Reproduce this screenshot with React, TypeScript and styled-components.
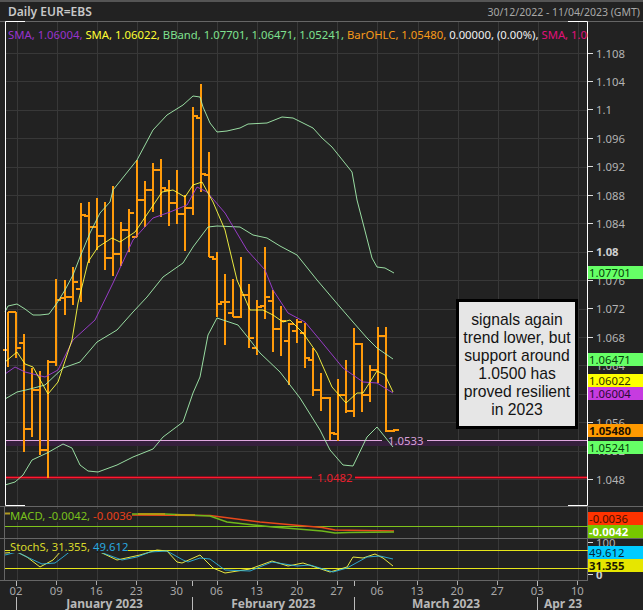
import styled, { createGlobalStyle } from "styled-components";

const GlobalStyle = createGlobalStyle`
	html, body {
		margin: 0;
		padding: 0;
		background: #222;
	}
`;

const Page = styled.div`
	display: flex;
	flex-direction: column;
	width: 643px;
	height: 610px;
	overflow: hidden;
	background: #222;
	border-top: 2px solid #555;
	box-sizing: border-box;
	font-family: "Noto Sans", "Liberation Sans", sans-serif;
	font-size: 11.3px;
	color: #b4b4b4;
`;
const Header = styled.div`
	display: flex;
	flex: none;
	justify-content: space-between;
	align-items: center;
	height: 19px;
	padding: 0 3px 0 8px;
`;
const Title = styled.span`
	font-size: 12px;
	font-weight: 600;
	color: #c8c8c8;
`;
const Range = styled.span`
	font-size: 10.5px;
	color: #a8a8a8;
`;
const PaneRow = styled.div<{ $height: number }>`
	display: flex;
	flex: none;
	height: ${(p) => p.$height}px;
	border-top: 1px solid #666;
	box-sizing: border-box;
`;
const Plot = styled.div`
	position: relative;
	width: 588px;
	flex: none;
	svg {
		display: block;
		overflow: visible;
	}
`;
const Legend = styled.div<{ $top: number; $left: number; $solid?: boolean }>`
	position: absolute;
	top: ${(p) => p.$top}px;
	left: ${(p) => p.$left}px;
	max-width: ${(p) => 588 - p.$left}px;
	overflow: hidden;
	white-space: nowrap;
	line-height: 13px;
	background: ${(p) => (p.$solid ? "#222" : "transparent")};
`;
const Value = styled.span<{ $color: string }>`
	color: ${(p) => p.$color};
`;
const Callout = styled.div`
	position: absolute;
	left: 456px;
	top: 277px;
	width: 122px;
	height: 130px;
	box-sizing: border-box;
	border: 3px solid #000;
	background: #e6e6e6;
	color: #141414;
	padding-top: 9px;
	font-family: "Liberation Sans", Arial, sans-serif;
	font-size: 15.7px;
	line-height: 18px;
	text-align: center;
	white-space: nowrap;
`;
const Axis = styled.div<{ $pad?: number }>`
	position: relative;
	flex: 1;
	padding-top: ${(p) => p.$pad || 0}px;
`;
const Tick = styled.div<{ $height: number; $bold?: boolean; $skip?: number }>`
	display: flex;
	align-items: center;
	gap: 3px;
	height: ${(p) => p.$height}px;
	margin-top: ${(p) => p.$skip || 0}px;
	font-weight: ${(p) => (p.$bold ? 700 : 400)};
	color: ${(p) => (p.$bold ? "#d0d0d0" : "#b4b4b4")};
	&:before {
		content: "";
		width: 5px;
		height: 1px;
		background: #ddd;
	}
`;
const Tag = styled.div<{ $bg: string; $fg: string; $top?: number; $bold?: boolean }>`
	position: ${(p) => (p.$top === undefined ? "static" : "absolute")};
	top: ${(p) => p.$top}px;
	left: 0;
	right: 0;
	height: 13px;
	padding-left: 1px;
	background: ${(p) => p.$bg};
	color: ${(p) => p.$fg};
	font-weight: ${(p) => (p.$bold ? 700 : 400)};
	line-height: 13px;
`;
const TimeAxis = styled.div`
	flex: none;
	width: 588px;
	height: 30px;
	border-top: 1px solid #666;
	box-sizing: border-box;
`;
const Weeks = styled.div`
	display: grid;
	grid-template-columns: repeat(15, 40.1px);
	margin-left: -4px;
	height: 14px;
`;
const Week = styled.div`
	position: relative;
	text-align: center;
	line-height: 20px;
	color: #a8a8a8;
	&:before {
		content: "";
		position: absolute;
		top: 0;
		left: 50%;
		width: 1px;
		height: 4px;
		background: #aaa;
	}
`;
const Months = styled.div`
	display: flex;
	margin-left: 16px;
	margin-top: 2px;
	height: 13px;
`;
const Month = styled.div<{ $width: number }>`
	position: relative;
	width: ${(p) => p.$width}px;
	border-left: 1px solid #bbb;
	box-sizing: border-box;
	text-align: center;
	font-size: 12px;
	font-weight: 700;
	line-height: 13px;
	color: #b8b8b8;
	&:before {
		content: "";
		position: absolute;
		top: -16px;
		left: -1px;
		width: 1px;
		height: 5px;
		background: #bbb;
	}
`;

// [top, bottom, open, close]
const bars = [
	[312, 367, 350, 312], [312, 358, 312, 348], [334, 452, 343, 429], [368, 437, 429, 390],
	[371, 455, 390, 450], [360, 478, 450, 362], [279, 366, 362, 300], [280, 315, 298, 297],
	[267, 305, 297, 282], [203, 302, 289, 215], [202, 263, 216, 227], [198, 250, 227, 236],
	[202, 270, 236, 258], [186, 276, 258, 254], [222, 266, 254, 230], [209, 252, 230, 213],
	[160, 237, 237, 200], [181, 227, 200, 190], [163, 212, 190, 170], [159, 217, 170, 188],
	[180, 226, 190, 203], [170, 224, 203, 214], [195, 251, 214, 208], [107, 215, 208, 116],
	[84, 192, 118, 174], [152, 257, 175, 257], [252, 317, 259, 304], [274, 345, 302, 302],
	[279, 317, 313, 317], [257, 318, 317, 295], [284, 348, 295, 338], [300, 355, 348, 307],
	[247, 319, 306, 297], [290, 352, 301, 329], [306, 356, 329, 321], [323, 385, 341, 324],
	[319, 343, 331, 322], [323, 368, 333, 358], [348, 396, 360, 390], [373, 411, 390, 398],
	[397, 440, 398, 433], [379, 441, 434, 395], [360, 413, 395, 411], [328, 417, 411, 344],
	[343, 412, 344, 395], [365, 402, 395, 370], [327, 383, 370, 336], [327, 432, 336, 431],
	[429, 432, 431, 430],
];
const barPath = bars
	.map((b, i) => {
		const x = Math.round(8.3 + 8.03 * i);
		return `M${x} ${b[0]}V${b[1]}M${x - 5} ${b[2]}H${x}M${x} ${b[3]}H${x + 5}`;
	})
	.join("");

const upper = "5,312 8,306 17,304 25,309 33,315 40,315 49,314 57,303 65,290 73,275 80,257 90,233 100,213 110,202 113,190 137,160 153,130 167,115 183,105 193,96 200,97 203,107 210,123 217,132 227,131 240,128 248,124 267,123 282,117 293,118 313,128 322,138 332,147 352,172 357,200 364,227 372,258 377,267 385,268 394,273";
const middle = "5,399 17,392 30,389 45,385 63,368 80,362 97,342 117,330 133,312 147,297 163,277 183,263 193,247 208,227 217,226 240,227 253,235 267,238 280,246 297,255 317,280 340,307 353,322 367,338 377,348 393,359";
const lower = "5,485 15,482 23,475 32,460 47,453 63,444 72,448 80,465 88,471 98,472 117,465 133,457 153,449 163,437 183,422 193,393 200,377 208,335 217,318 238,325 250,340 260,353 280,372 300,398 320,430 330,450 343,465 353,466 367,437 377,427 393,447";
const smaYellow = "5,362 17,352 25,364 33,367 48,394 58,382 72,340 78,303 88,262 98,247 112,238 120,242 135,232 150,210 162,192 173,190 185,197 193,185 202,182 213,202 225,230 237,280 250,310 263,310 273,315 283,322 290,320 303,333 317,353 332,387 346,403 357,393 363,393 377,371 385,375 393,392";
const smaPurple = "5,374 15,367 25,372 45,377 58,370 73,340 95,320 113,283 133,240 153,218 170,212 187,205 197,187 207,192 225,213 247,250 265,270 273,290 288,313 305,322 320,340 343,368 363,382 377,383 393,393";

const macdSignal = "130,515 210,515.5 260,522 322,527.5 335,530 394,531";
const macdLine = "130,514 165,514 210,516 227,522 273,527 322,531 335,533 349,532.5 394,532";
const stochBlue = "5,555 17,552 27,557 42,564 55,563 63,557 72,550 M100,552 122,560 137,557 150,552 167,551 183,560 188,562 200,558 210,559 225,570 250,571 272,562 297,566 310,565 333,572 347,568 367,557 380,556 393,559";
const stochYellow = "5,553 17,552 27,557 40,567 53,560 62,550 M100,552 117,560 140,555 157,550 167,551 177,562 182,563 200,555 213,568 225,573 250,569 272,561 288,566 303,563 330,572 347,567 353,557 363,558 375,554 383,558 393,566";
const toPath = (s: string) => "M" + s.replace(/ M/g, "M").replace(/ /g, "L");

const weekX = Array.from({ length: 15 }, (_, i) => 16.5 + 40.1 * i);
const priceY = Array.from({ length: 16 }, (_, i) => 53 + 28.4 * i);

const priceTicks = ["1.108", "1.104", "1.1", "1.096", "1.092", "1.088", "1.084", "1.08", "1.076", "1.072", "1.068", "1.064", "1.06", "1.056", "1.052", "1.048"];
const priceTags = [
	{ top: 244, bg: "#66ff66", fg: "#04400a", text: "1.07701" },
	{ top: 331, bg: "#66ff66", fg: "#04400a", text: "1.06471" },
	{ top: 352, bg: "#ffff00", fg: "#333300", text: "1.06022" },
	{ top: 365, bg: "#c63be0", fg: "#2a0a33", text: "1.06004" },
	{ top: 402, bg: "#ff9900", fg: "#1a0f00", text: "1.05480", bold: true },
	{ top: 419, bg: "#66ff66", fg: "#04400a", text: "1.05241" },
];
const weeks = ["02", "09", "16", "23", "30", "06", "13", "20", "27", "06", "13", "20", "27", "03", "10"];

const Lines = ({ d, color }: { d: string; color: string }) => (
	<path d={d} fill="none" stroke={color} strokeWidth="0.9" strokeLinejoin="round" />
);

const PriceChart = () => (
	<svg width="588" height="484" viewBox="0 22 588 484">
		{weekX.map((x) => (
			<path key={x} d={`M${Math.round(x)}.5 22V506`} stroke="#383838" />
		))}
		{priceY.map((y) => (
			<path key={y} d={`M5 ${Math.round(y)}.5H588`} stroke="#383838" />
		))}
		<rect x="5" y="441" width="583" height="5" fill="#351f3c" />
		<path d="M5 440.5H382M427 440.5H588" stroke="#e0a8e0" />
		<path d="M5 477.5H312M355 477.5H588" stroke="#50101a" strokeWidth="3" />
		<path d="M5 477.5H312M355 477.5H588" stroke="#ff1a30" strokeWidth="1.3" />
		<path d={barPath} fill="none" stroke="#ff9a0a" strokeWidth="2" shapeRendering="crispEdges" />
		<Lines d={toPath(upper)} color="#a6f0b0" />
		<Lines d={toPath(middle)} color="#a6f0b0" />
		<Lines d={toPath(lower)} color="#a6f0b0" />
		<Lines d={toPath(smaPurple)} color="#a43ed8" />
		<Lines d={toPath(smaYellow)} color="#ffff44" />
		<text x="388" y="445" fill="#d8a0d8" fontSize="11.3" fontFamily="Noto Sans">1.0533</text>
		<text x="317" y="482" fill="#e8202e" fontSize="11.3" fontFamily="Noto Sans">1.0482</text>
		<path d="M25 21.5H5.5V505.5H25M568 21.5H587.5V505.5H568" fill="none" stroke="#fff" />
	</svg>
);

const MacdChart = () => (
	<svg width="588" height="31" viewBox="0 507 588 31">
		{weekX.map((x) => (
			<path key={x} d={`M${Math.round(x)}.5 507V538`} stroke="#383838" />
		))}
		<path d="M4.5 507V538M587.5 507V538" stroke="#666" />
		<path d="M5 526.5H588" stroke="#7fc41c" />
		<path d="M5 513.5H11" stroke="#b09a20" strokeWidth="2" />
		<path d={toPath(macdSignal)} fill="none" stroke="#e8481a" strokeWidth="1.5" />
		<path d={toPath(macdLine)} fill="none" stroke="#6fb81c" strokeWidth="1.5" />
		<path d="M138 514H165M175 515H195" stroke="#c89a10" strokeWidth="1.5" />
	</svg>
);

const StochChart = () => (
	<svg width="588" height="41" viewBox="0 539 588 41">
		{weekX.map((x) => (
			<path key={x} d={`M${Math.round(x)}.5 539V580`} stroke="#383838" />
		))}
		<path d="M4.5 539V580M587.5 539V580" stroke="#666" />
		<path d="M5 550.5H588M5 568.5H588" stroke="#e6e61a" />
		<Lines d={toPath(stochYellow)} color="#ffff44" />
		<Lines d={toPath(stochBlue)} color="#2fb4e0" />
	</svg>
);

export default function App() {
	return (
		<Page>
			<GlobalStyle />
			<Header>
				<Title>Daily EUR=EBS</Title>
				<Range>30/12/2022 - 11/04/2023 (GMT)</Range>
			</Header>
			<PaneRow $height={485}>
				<Plot>
					<PriceChart />
					<Legend $top={6} $left={8}>
						<Value $color="#9933cc">SMA, 1.06004, </Value>
						<Value $color="#ffff33">SMA, 1.06022, </Value>
						<Value $color="#7fe08f">BBand, 1.07701, 1.06471, 1.05241, </Value>
						<Value $color="#f59a1a">BarOHLC, 1.05480, </Value>
						<Value $color="#f0f0f0">0.00000, (0.00%), </Value>
						<Value $color="#e0107a">SMA, 1.06000</Value>
					</Legend>
					<Callout>
						signals again<br />
						trend lower, but<br />
						support around<br />
						1.0500 has<br />
						proved resilient<br />
						in 2023
					</Callout>
				</Plot>
				<Axis $pad={17}>
					{priceTicks.map((t) => (
						<Tick key={t} $height={28.4} $bold={t === "1.08"}>{t}</Tick>
					))}
					{priceTags.map((t) => (
						<Tag key={t.text} $top={t.top} $bg={t.bg} $fg={t.fg} $bold={t.bold}>{t.text}</Tag>
					))}
				</Axis>
			</PaneRow>
			<PaneRow $height={32}>
				<Plot>
					<MacdChart />
					<Legend $top={2} $left={10} $solid>
						<Value $color="#7ac11c">MACD, -0.0042, </Value>
						<Value $color="#e8401a">-0.0036</Value>
					</Legend>
				</Plot>
				<Axis $pad={5}>
					<Tag $bg="#ff3300" $fg="#4a0f00">-0.0036</Tag>
					<Tag $bg="#77c800" $fg="#ffffff" $bold>-0.0042</Tag>
				</Axis>
			</PaneRow>
			<PaneRow $height={42}>
				<Plot>
					<StochChart />
					<Legend $top={1} $left={10} $solid>
						<Value $color="#d8d82a">StochS, 31.355, </Value>
						<Value $color="#29a9e0">49.612</Value>
					</Legend>
				</Plot>
				<Axis>
					<Tick $height={6}>100</Tick>
					<Tick $height={6} $skip={26} $bold>0</Tick>
					<Tag $top={7} $bg="#00ccff" $fg="#04243a">49.612</Tag>
					<Tag $top={20} $bg="#e6e600" $fg="#1a1a00" $bold>31.355</Tag>
				</Axis>
			</PaneRow>
			<TimeAxis>
				<Weeks>
					{weeks.map((w, i) => (
						<Week key={i}>{w}</Week>
					))}
				</Weeks>
				<Months>
					<Month $width={176}>January 2023</Month>
					<Month $width={162}>February 2023</Month>
					<Month $width={183}>March 2023</Month>
					<Month $width={51}>Apr 23</Month>
				</Months>
			</TimeAxis>
		</Page>
	);
}
